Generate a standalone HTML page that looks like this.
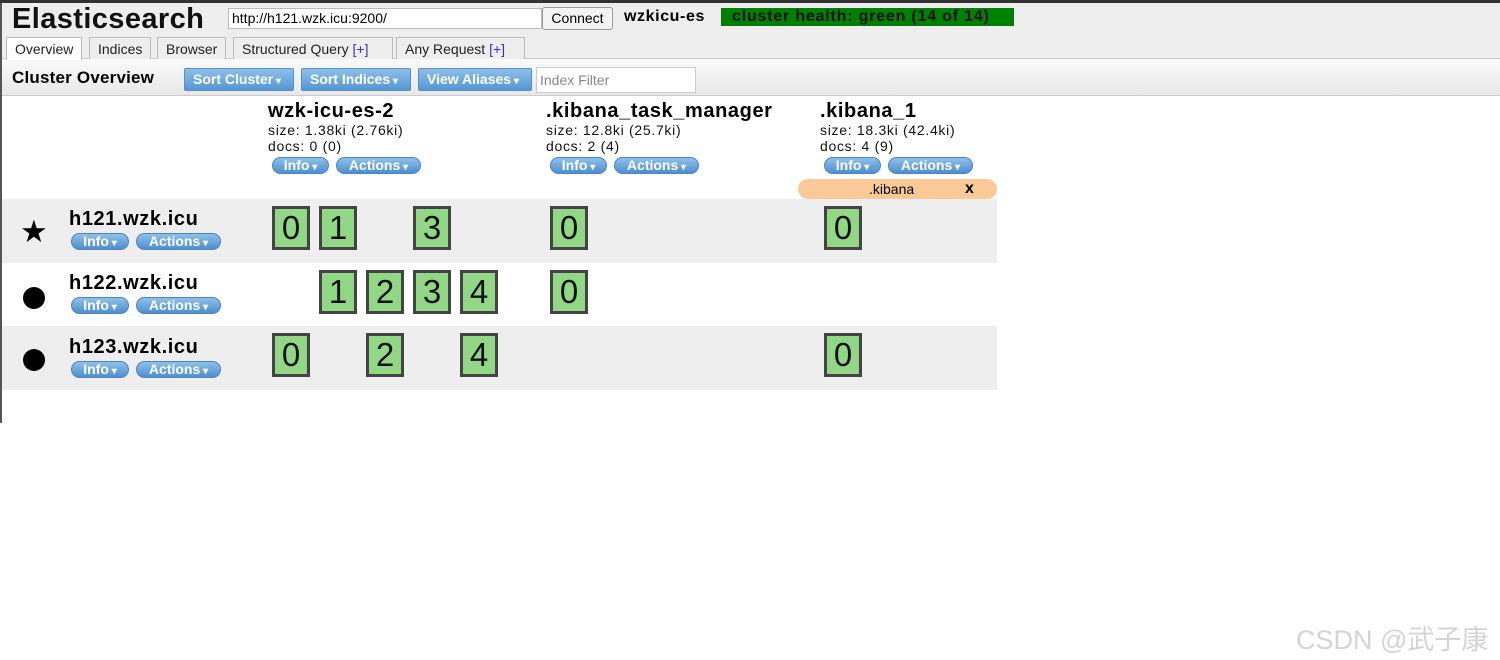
<!DOCTYPE html>
<html><head><meta charset="utf-8"><style>
*{box-sizing:border-box}
body{margin:0;width:1500px;height:660px;background:#fff;font-family:"Liberation Sans",Arial,sans-serif;position:relative;overflow:hidden}
.a{position:absolute}
.btn{position:absolute;height:17px;border-radius:9px;background:linear-gradient(#8fc0ea,#4d8fcf);border:1px solid #4a86c0;color:#fff;font-weight:bold;font-size:14px;line-height:15px;text-align:center}
.btn:after{content:" ▾";font-size:10px}
.tb{position:absolute;top:68px;height:23px;background:linear-gradient(#8ec0ea,#5496d4);border:1px solid #5a90c8;color:#fff;font-weight:bold;font-size:14px;line-height:20px;padding-left:8px;border-radius:2px}
.tb:after{content:" ▾";font-size:10px}
.s{position:absolute;width:38px;height:44px;background:#92d785;border:3px solid #444;font-size:33px;line-height:38px;text-align:center;color:#111}
.nm{position:absolute;font-weight:bold;font-size:20px;letter-spacing:0.6px}
.t{position:absolute;font-size:14px;color:#111;letter-spacing:0.7px}
.tab{position:absolute;top:37px;height:22px;border:1px solid #bbb;border-bottom:none;background:#eee;font-size:14px;line-height:22px;padding:0 8px;color:#222}
.tab b{font-weight:normal;color:#33c}
</style></head><body>
<div class="a" style="left:0;top:0;width:1500px;height:3px;background:#333"></div>
<div class="a" style="left:0;top:3px;width:1500px;height:55px;background:#eee"></div>
<div class="a" style="left:0;top:58px;width:1500px;height:38px;background:linear-gradient(#fafafa,#e8e8e8);border-top:1px solid #ccc;border-bottom:1px solid #ccc"></div>
<div class="a" style="left:0;top:3px;width:2px;height:420px;background:#555"></div>
<div class="a" style="left:12px;top:3px;font-size:29px;font-weight:bold;color:#111;letter-spacing:0.4px">Elasticsearch</div>
<div class="a" style="left:228px;top:8px;width:314px;height:21px;border:1px solid #bbb;background:#fff;font-size:14px;line-height:19px;padding-left:3px">http://h121.wzk.icu:9200/</div>
<div class="a" style="left:542px;top:7px;width:71px;height:23px;border:1px solid #999;border-radius:3px;background:#f4f4f4;font-size:14px;line-height:21px;text-align:center">Connect</div>
<div class="a" style="left:624px;top:8px;font-size:16px;font-weight:bold;letter-spacing:0.6px">wzkicu-es</div>
<div class="a" style="left:721px;top:8px;width:293px;height:18px;background:#008000;font-size:16px;font-weight:bold;line-height:18px;padding-left:11px;color:#111;letter-spacing:0.8px">cluster health: green (14 of 14)</div>
<div class="tab" style="left:6px;background:#fff;height:23px">Overview</div>
<div class="tab" style="left:89px">Indices</div>
<div class="tab" style="left:157px">Browser</div>
<div class="tab" style="left:233px;width:160px">Structured Query <b>[+]</b></div>
<div class="tab" style="left:396px;width:129px">Any Request <b>[+]</b></div>
<div class="a" style="left:12px;top:68px;font-size:17px;font-weight:bold;letter-spacing:0.2px">Cluster Overview</div>
<div class="tb" style="left:184px;width:110px">Sort Cluster</div>
<div class="tb" style="left:301px;width:110px">Sort Indices</div>
<div class="tb" style="left:418px;width:114px">View Aliases</div>
<div class="a" style="left:536px;top:67px;width:160px;height:26px;border:1px solid #ccc;background:#fff;color:#888;font-size:14px;line-height:24px;padding-left:3px">Index Filter</div>

<div class="nm" style="left:268px;top:100px">wzk-icu-es-2</div>
<div class="t" style="left:268px;top:122px">size: 1.38ki (2.76ki)</div>
<div class="t" style="left:268px;top:138px">docs: 0 (0)</div>
<div class="btn" style="left:272px;top:157px;width:57px">Info</div>
<div class="btn" style="left:336px;top:157px;width:85px">Actions</div>
<div class="nm" style="left:546px;top:100px">.kibana_task_manager</div>
<div class="t" style="left:546px;top:122px">size: 12.8ki (25.7ki)</div>
<div class="t" style="left:546px;top:138px">docs: 2 (4)</div>
<div class="btn" style="left:550px;top:157px;width:57px">Info</div>
<div class="btn" style="left:614px;top:157px;width:85px">Actions</div>
<div class="nm" style="left:820px;top:100px">.kibana_1</div>
<div class="t" style="left:820px;top:122px">size: 18.3ki (42.4ki)</div>
<div class="t" style="left:820px;top:138px">docs: 4 (9)</div>
<div class="btn" style="left:824px;top:157px;width:57px">Info</div>
<div class="btn" style="left:888px;top:157px;width:85px">Actions</div>
<div class="a" style="left:798px;top:179px;width:199px;height:20px;border-radius:10px;background:#fac995;font-size:14px;line-height:20px"><span style="position:absolute;left:71px">.kibana</span><b style="position:absolute;left:167px;font-size:16px">x</b></div>

<div class="a" style="left:2px;top:199px;width:995px;height:64px;background:#eee"></div>
<div class="a" style="left:2px;top:326px;width:995px;height:64px;background:#eee"></div>

<div class="a" style="left:20px;top:214px;font-size:31px">★</div>
<div class="a" style="left:23px;top:287px;width:22px;height:22px;border-radius:50%;background:#000"></div>
<div class="a" style="left:23px;top:349px;width:22px;height:22px;border-radius:50%;background:#000"></div>
<div class="nm" style="left:69px;top:208px">h121.wzk.icu</div>
<div class="btn" style="left:71px;top:233px;width:58px">Info</div>
<div class="btn" style="left:136px;top:233px;width:85px">Actions</div>
<div class="nm" style="left:69px;top:272px">h122.wzk.icu</div>
<div class="btn" style="left:71px;top:297px;width:58px">Info</div>
<div class="btn" style="left:136px;top:297px;width:85px">Actions</div>
<div class="nm" style="left:69px;top:336px">h123.wzk.icu</div>
<div class="btn" style="left:71px;top:361px;width:58px">Info</div>
<div class="btn" style="left:136px;top:361px;width:85px">Actions</div>

<div class="s" style="left:272px;top:206px">0</div>
<div class="s" style="left:319px;top:206px">1</div>
<div class="s" style="left:413px;top:206px">3</div>
<div class="s" style="left:550px;top:206px">0</div>
<div class="s" style="left:824px;top:206px">0</div>
<div class="s" style="left:319px;top:270px">1</div>
<div class="s" style="left:366px;top:270px">2</div>
<div class="s" style="left:413px;top:270px">3</div>
<div class="s" style="left:460px;top:270px">4</div>
<div class="s" style="left:550px;top:270px">0</div>
<div class="s" style="left:272px;top:333px">0</div>
<div class="s" style="left:366px;top:333px">2</div>
<div class="s" style="left:460px;top:333px">4</div>
<div class="s" style="left:824px;top:333px">0</div>

<div class="a" style="left:1296px;top:618px;font-size:27px;color:#d4d4d4;font-family:'Liberation Sans','Noto Sans CJK SC',sans-serif">CSDN @武子康</div>
</body></html>
